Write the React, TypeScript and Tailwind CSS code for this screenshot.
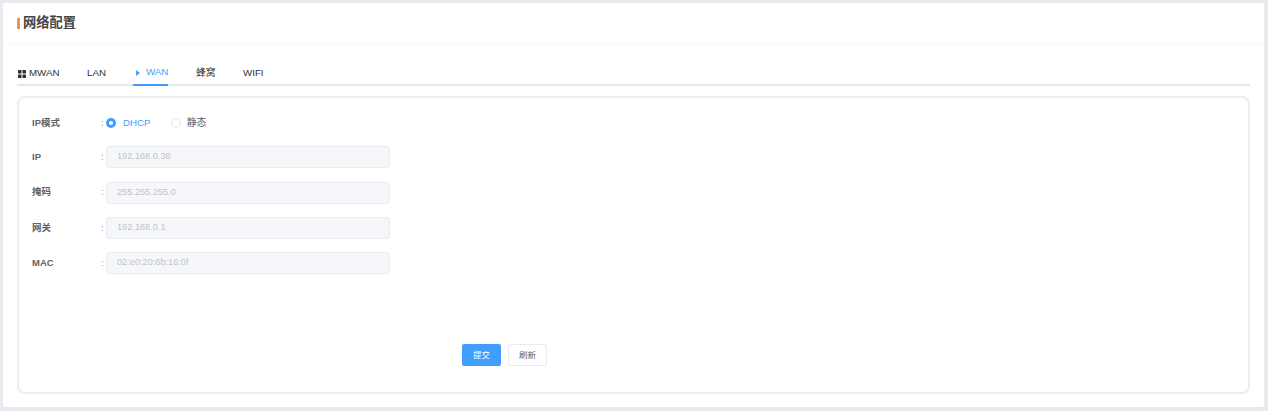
import React from "react";

const font = { fontFamily: '"Liberation Sans", "Noto Sans CJK SC", sans-serif' };

function Field({ label, value }: { label: string; value: string }) {
  return (
    <div className="flex items-center h-[22px] mb-[13.3px]">
      <div className="w-[69px] text-[9.5px] font-bold text-[#606266]">{label}</div>
      <div className="w-[5px] text-[9.5px] text-[#909399]">:</div>
      <div className="w-[284px] h-[22px] flex items-center pl-[10px] rounded-[3px] border border-[#e9ebf0] bg-[#f5f7fa] text-[9.2px] text-[#c0c4cc]">
        {value}
      </div>
    </div>
  );
}

export default function App() {
  return (
    <div style={font} className="w-[1268px] h-[411px] bg-[#e9ebf0] p-[3px] pr-[4px] pb-[4px] overflow-hidden">
      <div className="h-full bg-white rounded-[2px] flex flex-col">
        <div className="h-[41px] shrink-0 flex items-center pl-[13.5px] border-b border-[#f6f6f6]">
          <span className="w-[3px] h-[11px] bg-[#f0953a] mr-[3.5px]" />
          <span className="text-[13.25px] font-bold text-[#444]">网络配置</span>
        </div>
        <div className="mx-[14px] mt-[15px] h-[27px] flex border-b-2 border-[#e4e7ed] shrink-0 text-[9.75px] text-[#303133] whitespace-nowrap">
          <div className="h-[27px] flex items-center pt-[2px] gap-[3px] w-[42px]">
            <svg width="8" height="8" viewBox="0 0 8 8" fill="#303133" className="ml-[1px] shrink-0">
              <rect x="0" y="0" width="3.5" height="3.5" rx="0.5" />
              <rect x="4.5" y="0" width="3.5" height="3.5" rx="0.5" />
              <rect x="0" y="4.5" width="3.5" height="3.5" rx="0.5" />
              <rect x="4.5" y="4.5" width="3.5" height="3.5" rx="0.5" />
            </svg>
            <span>MWAN</span>
          </div>
          <div className="h-[27px] flex items-center pt-[2px] ml-[28px] w-[18px]">LAN</div>
          <div className="h-[27px] flex items-center pt-[2px] ml-[28px] w-[35px] pl-[3px] gap-[6px] border-b-2 border-[#409eff] text-[#409eff]">
            <svg width="4" height="6" viewBox="0 0 4 6" fill="#409eff" className="shrink-0">
              <path d="M0 0 L4 3 L0 6 Z" />
            </svg>
            <span>WAN</span>
          </div>
          <div className="h-[27px] flex items-center pt-[2px] ml-[28px] w-[19px]">蜂窝</div>
          <div className="h-[27px] flex items-center pt-[2px] ml-[28px]">WIFI</div>
        </div>
        <div className="mx-[14px] mt-[10px] h-[298px] border-2 border-[#eeeeee] rounded-[8px] pl-[13px] pt-[13px] flex flex-col">
          <div className="flex items-center h-[24px] mb-[11.3px]">
            <div className="w-[69px] text-[9.5px] font-bold text-[#606266]">IP模式</div>
            <div className="w-[5px] text-[9.5px] text-[#909399]">:</div>
            <span className="w-[10px] h-[10px] rounded-full bg-[#409eff] flex items-center justify-center">
              <span className="w-[4px] h-[4px] rounded-full bg-white" />
            </span>
            <span className="ml-[7px] text-[9.75px] text-[#409eff]">DHCP</span>
            <span className="ml-[20px] w-[10px] h-[10px] rounded-full border border-[#e4e7ed] bg-white" />
            <span className="ml-[6px] text-[9.75px] text-[#606266]">静态</span>
          </div>
          <Field label="IP" value="192.168.0.36" />
          <Field label="掩码" value="255.255.255.0" />
          <Field label="网关" value="192.168.0.1" />
          <Field label="MAC" value="02:e0:20:6b:16:0f" />
          <div className="flex mt-[57px] pl-[430px] gap-[7px]">
            <div className="w-[39px] h-[22px] rounded-[2px] bg-[#409eff] text-white text-[8.5px] flex items-center justify-center">提交</div>
            <div className="w-[39px] h-[22px] rounded-[2px] border border-[#e9ebf0] bg-white text-[#606266] text-[8.5px] flex items-center justify-center">刷新</div>
          </div>
        </div>
      </div>
    </div>
  );
}
